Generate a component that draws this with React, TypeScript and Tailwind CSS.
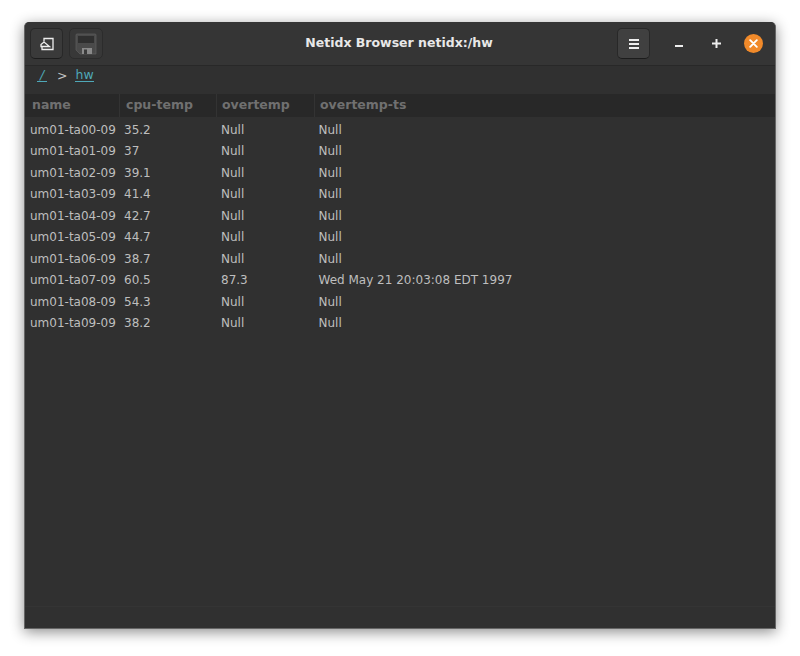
const rows = [
  ['um01-ta00-09', '35.2', 'Null', 'Null'],
  ['um01-ta01-09', '37', 'Null', 'Null'],
  ['um01-ta02-09', '39.1', 'Null', 'Null'],
  ['um01-ta03-09', '41.4', 'Null', 'Null'],
  ['um01-ta04-09', '42.7', 'Null', 'Null'],
  ['um01-ta05-09', '44.7', 'Null', 'Null'],
  ['um01-ta06-09', '38.7', 'Null', 'Null'],
  ['um01-ta07-09', '60.5', '87.3', 'Wed May 21 20:03:08 EDT 1997'],
  ['um01-ta08-09', '54.3', 'Null', 'Null'],
  ['um01-ta09-09', '38.2', 'Null', 'Null'],
];

const BackIcon = () => (
  <svg width="14" height="14" viewBox="0 0 14 14" fill="none" stroke="#eeeeee" strokeWidth="1.3">
    <path d="M4 4.5V1.5H13V12.5H2V10" />
    <path d="M1 7.5L4 5L9.5 9.5H1Z" />
  </svg>
);

const SaveIcon = () => (
  <svg width="22" height="22" viewBox="0 0 22 22">
    <path d="M2 1H20Q21 1 21 2V21H5L1 17V2Q1 1 2 1Z" fill="#4a4a4a" stroke="#5f5f5f" strokeWidth="0.7" />
    <rect x="3" y="3" width="16" height="7" fill="#2f2f2f" />
    <rect x="7" y="15" width="10" height="6" fill="#8a8a8a" />
    <rect x="9" y="16.5" width="3" height="4.5" fill="#3a3a3a" />
  </svg>
);

const MenuIcon = () => (
  <svg width="10" height="10" viewBox="0 0 10 10" fill="#eeeeee">
    <rect x="0" y="0" width="10" height="2" />
    <rect x="0" y="4" width="10" height="2" />
    <rect x="0" y="8" width="10" height="2" />
  </svg>
);

export default function App() {
  return (
    <div className="h-[656px] w-[800px] bg-white pl-[24px] pt-[22px] font-['DejaVu_Sans',sans-serif] overflow-hidden">
      <div className="flex h-[607px] w-[752px] flex-col rounded-t-[5px] bg-[#303030] shadow-[0_3px_14px_rgba(0,0,0,0.45)] border-x border-b border-[#666666] border-t-[#777777]">
        {/* header bar */}
        <div className="flex h-[44px] shrink-0 items-center rounded-t-[5px] border-b border-[#282828] bg-[#353535] pl-[5px] pr-[12px]">
          <div className="flex flex-1 items-center gap-[6px]">
            <button className="flex h-[31px] w-[33px] items-center justify-center rounded-[5px] border border-[#282828] border-b-[#1c1c1c] bg-[#3a3a3a]">
              <BackIcon />
            </button>
            <button className="flex h-[31px] w-[34px] items-center justify-center rounded-[5px] border border-[#2c2c2c] bg-[#383838]">
              <SaveIcon />
            </button>
          </div>
          <div className="ml-[5px] text-[12.5px] font-bold leading-none text-[#e8e8e8]">
            Netidx Browser netidx:/hw
          </div>
          <div className="flex flex-1 items-center justify-end">
            <button className="flex h-[31px] w-[33px] items-center justify-center rounded-[5px] border border-[#282828] border-b-[#1c1c1c] bg-[#404040]">
              <MenuIcon />
            </button>
            <div className="ml-[25px] mt-[5px] h-[2px] w-[8px] bg-[#eeeeee]" />
            <svg className="ml-[29px]" width="9" height="9" viewBox="0 0 9 9" fill="#eeeeee">
              <rect x="0" y="3.5" width="9" height="2" />
              <rect x="3.5" y="0" width="2" height="9" />
            </svg>
            <div className="ml-[23px] flex h-[19px] w-[19px] items-center justify-center rounded-full bg-[#f18a2a]">
              <svg width="9" height="9" viewBox="0 0 9 9" stroke="#ffffff" strokeWidth="1.9" strokeLinecap="round">
                <path d="M1.2 1.2L7.8 7.8M7.8 1.2L1.2 7.8" />
              </svg>
            </div>
          </div>
        </div>

        {/* path */}
        <div className="flex h-[28px] shrink-0 items-start pl-[12px] pt-[1px] text-[12.5px] text-[#c4c4c4]">
          <a className="h-[15px] w-[10px] border-b border-[#4fa8b8] text-center italic leading-[15px] text-[#4fa8b8]">/</a>
          <span className="ml-[10px]">&gt;</span>
          <a className="ml-[8px] h-[15px] leading-[15px] border-b border-[#4fa8b8] text-[#4fa8b8]">hw</a>
        </div>

        {/* table */}
        <div className="flex h-[23px] shrink-0 items-center bg-[#282828] text-[12.5px] font-bold text-[#707070]">
          <div className="flex h-full w-[95px] items-center border-r border-[#333333] pl-[7px]">name</div>
          <div className="flex h-full w-[97px] items-center border-r border-[#333333] pl-[6px]">cpu-temp</div>
          <div className="flex h-full w-[98px] items-center border-r border-[#333333] pl-[5px]">overtemp</div>
          <div className="flex h-full flex-1 items-center pl-[5px]">overtemp-ts</div>
        </div>
        <div className="flex-1 pt-[2px]">
          {rows.map((row) => (
            <div key={row[0]} className="flex h-[21.5px] items-center text-[12px] text-[#bebebe]">
              <div className="w-[99px] shrink-0 pl-[5px]">{row[0]}</div>
              <div className="w-[97px] shrink-0">{row[1]}</div>
              <div className="w-[97.5px] shrink-0">{row[2]}</div>
              <div>{row[3]}</div>
            </div>
          ))}
        </div>
        <div className="h-[22px] shrink-0 border-t border-[#343434]" />
      </div>
    </div>
  );
}
